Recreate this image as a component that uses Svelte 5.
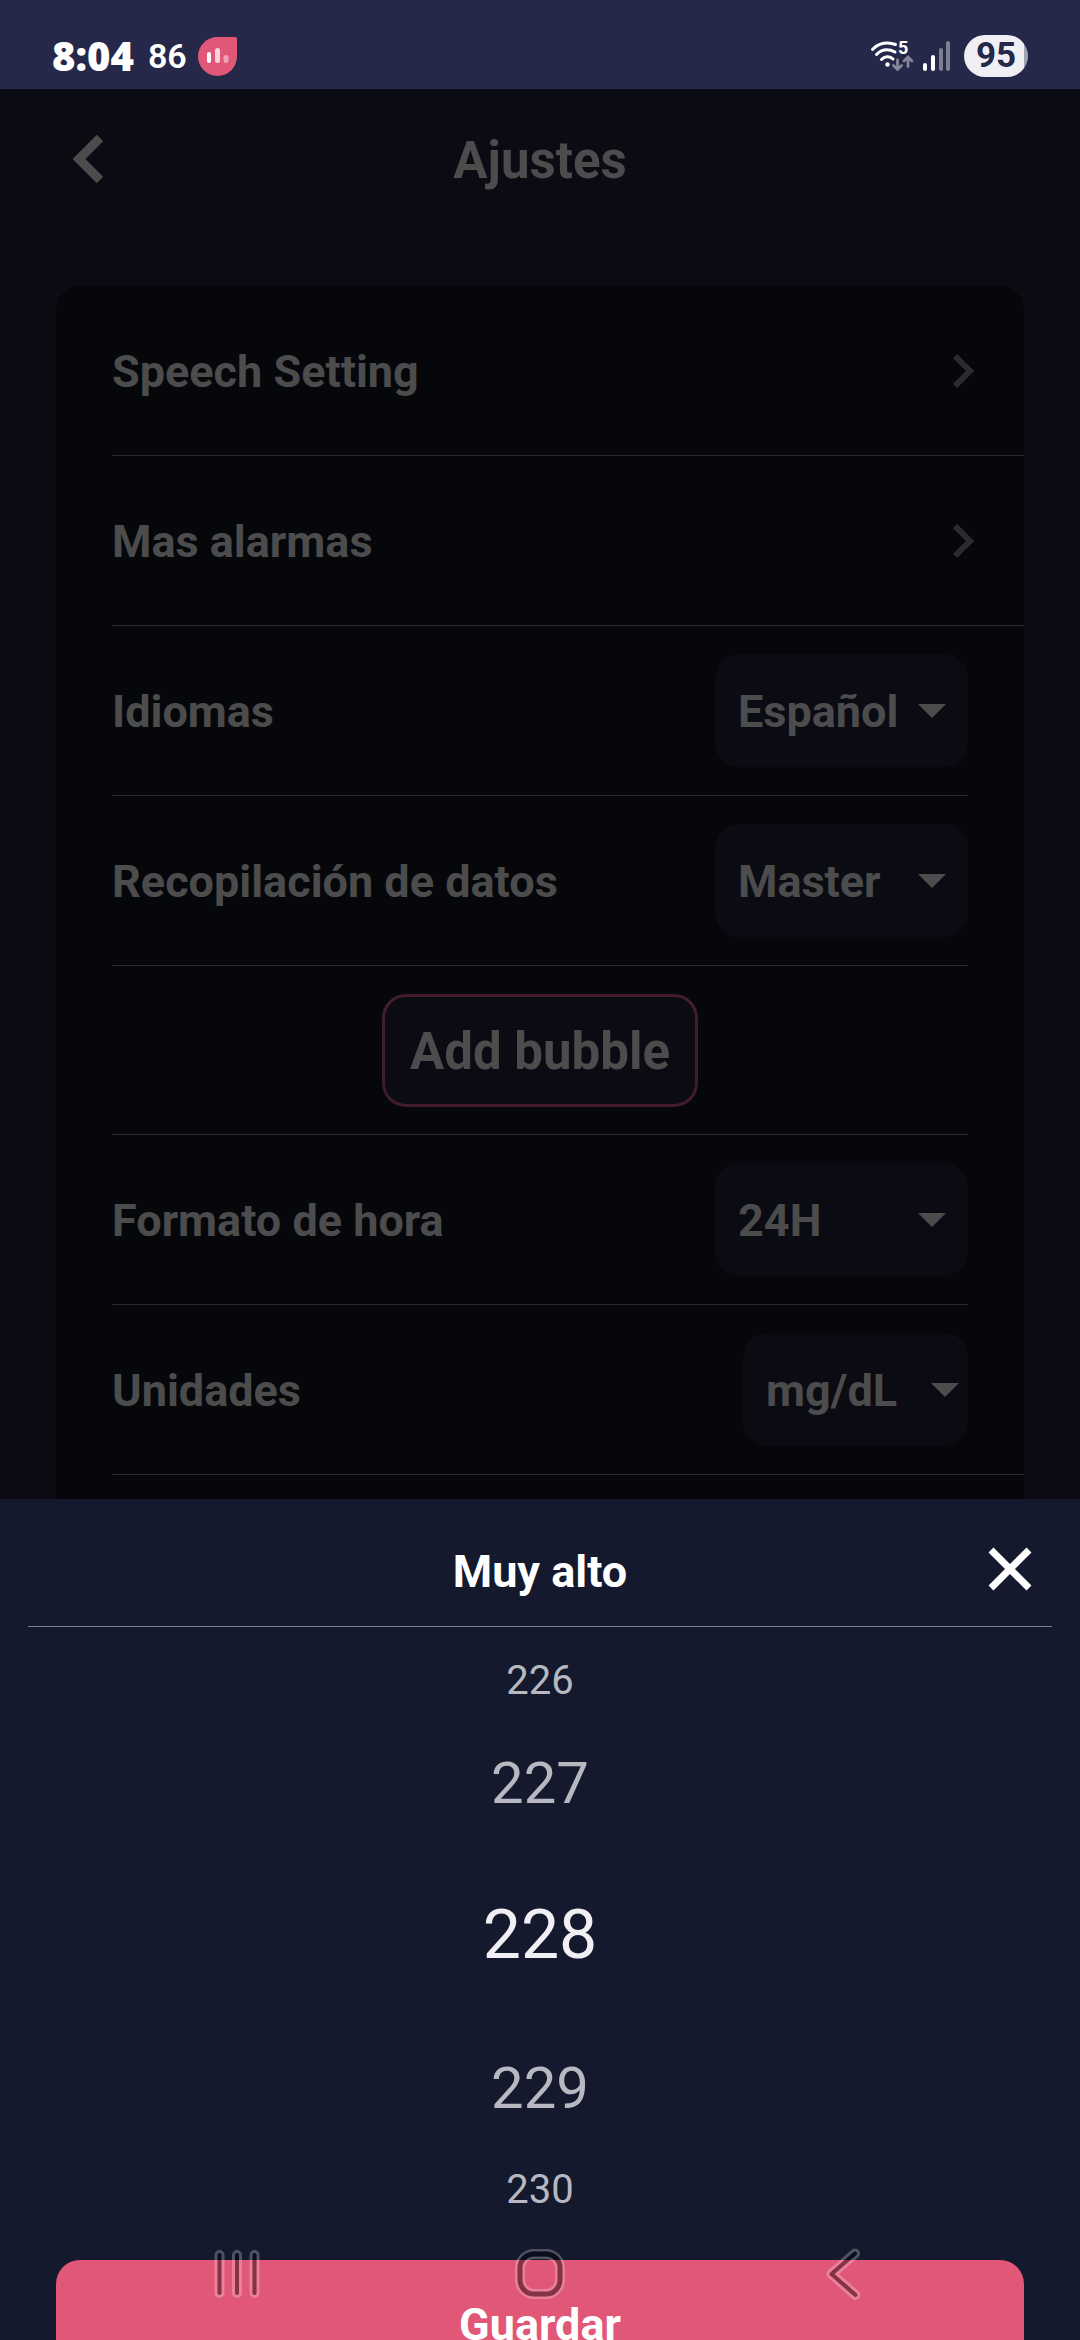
<script>
  const links = ['Speech Setting', 'Mas alarmas'];
  const choices = [
    { id: 'language', label: 'Idiomas', options: ['Español', 'English'] },
    { id: 'collection', label: 'Recopilación de datos', options: ['Master', 'Follower'] }
  ];
  const levels = [
    { value: 226, size: 'far' },
    { value: 227, size: 'near' },
    { value: 228, size: 'current' },
    { value: 229, size: 'near' },
    { value: 230, size: 'far' }
  ];
  let selected = $state(228);
</script>

{#snippet picker(id, label, options, narrow)}
  <div class="row" class:wide={narrow}>
    <label for={id}>{label}</label>
    <div class="select" class:narrow>
      <select {id}>
        {#each options as option}
          <option>{option}</option>
        {/each}
      </select>
      <svg class="caret" viewBox="0 0 28 14" aria-hidden="true"><path d="M0 0h28L14 14z" /></svg>
    </div>
  </div>
{/snippet}

{#snippet navIcon(id, d, thick)}
  <svg viewBox="0 0 52 52" aria-hidden="true">
    <mask id={id} maskUnits="userSpaceOnUse" x="0" y="0" width="52" height="52">
      <rect width="52" height="52" fill="#fff" />
      <path {d} stroke="#000" stroke-width={thick} />
    </mask>
    <path {d} stroke="#fff" stroke-opacity="0.25" stroke-width="10" mask="url(#{id})" />
    <path {d} stroke="#000" stroke-opacity="0.41" stroke-width={thick} />
  </svg>
{/snippet}

<div class="screen">
  <div class="status">
    <span class="clock">8:04</span>
    <span class="glucose">86</span>
    <svg class="app" viewBox="0 0 39 39" aria-hidden="true">
      <path d="M19.5 0H37a2 2 0 0 1 2 2v17.500A19.500 19.500 0 1 1 19.500 0z" fill="#e05777" />
      <rect x="9" y="15" width="4" height="11" rx="2" fill="#fff" />
      <rect x="17" y="11" width="5" height="15" rx="2.500" fill="#fbd3de" />
      <rect x="25.500" y="18" width="5" height="8" rx="2.500" fill="#f0a3b5" />
    </svg>
    <svg class="wifi" viewBox="0 0 44 34" aria-hidden="true">
      <g fill="none" stroke="#fff" stroke-width="3" stroke-linecap="round">
        <path d="M2.500 10.500C9 3.500 18 2.500 25.500 5.500" />
        <path d="M6.500 15.500C12 10 19 10 25 13" />
        <path d="M11.500 20.500C15 17 20 17 23 20" />
      </g>
      <circle cx="17.500" cy="25.500" r="2.200" fill="#fff" />
      <text x="28" y="15" class="band">5</text>
      <g fill="none" stroke="#85869a" stroke-width="2.800" stroke-linecap="round" stroke-linejoin="round">
        <path d="M27.500 21v9.500M23.500 26.500l4 4 4-4" />
        <path d="M38 27.500V18M34 22l4-4 4 4" />
      </g>
    </svg>
    <svg class="signal" viewBox="0 0 28 30" aria-hidden="true">
      <rect x="0" y="22" width="4" height="8" rx="2" fill="#fff" />
      <rect x="8" y="14" width="4" height="16" rx="2" fill="#fff" />
      <rect x="16" y="7" width="4" height="23" rx="2" fill="#7d7e92" />
      <rect x="23" y="0" width="4" height="30" rx="2" fill="#7d7e92" />
    </svg>
    <span class="battery">95</span>
  </div>

  <main>
    <header>
      <button class="back" aria-label="Atrás">
        <svg viewBox="0 0 30 48" aria-hidden="true"><path d="M26 3L5 24l21 21" /></svg>
      </button>
      <h1>Ajustes</h1>
    </header>

    <div class="card">
      {#each links as link}
        <a class="row wide" href="#settings">
          <span class="name">{link}</span>
          <svg class="chevron" viewBox="0 0 20 34" aria-hidden="true"><path d="M2 2l15 15L2 32" /></svg>
        </a>
      {/each}
      {#each choices as c}
        {@render picker(c.id, c.label, c.options, false)}
      {/each}
      <div class="row action">
        <button class="bubble">Add bubble</button>
      </div>
      {@render picker('hour', 'Formato de hora', ['24H', '12H'], false)}
      {@render picker('units', 'Unidades', ['mg/dL', 'mmol/L'], true)}
    </div>
  </main>

  <section class="sheet" aria-labelledby="sheet-title">
    <div class="sheet-head">
      <h2 id="sheet-title">Muy alto</h2>
      <button class="close" aria-label="Cerrar">
        <svg viewBox="0 0 46 46" aria-hidden="true"><path d="M4 4l38 38M42 4L4 42" /></svg>
      </button>
    </div>
    <div class="wheel">
      {#each levels as level}
        <button class={level.size} aria-pressed={selected === level.value} onclick={() => (selected = level.value)}>
          {level.value}
        </button>
      {/each}
    </div>
    <button class="save">Guardar</button>
  </section>

  <nav>
    <button aria-label="Recientes">{@render navIcon('m-recent', 'M8.500 7v38M26 7v38M43.500 7v38', 4)}</button>
    <button aria-label="Inicio">
      {@render navIcon('m-home', 'M20 6h12a14 14 0 0 1 14 14v12a14 14 0 0 1-14 14H20a14 14 0 0 1-14-14V20A14 14 0 0 1 20 6z', 5)}
    </button>
    <button aria-label="Volver">{@render navIcon('m-back', 'M38 5.500L14.500 26 38.500 47', 4)}</button>
  </nav>
</div>

<style>
  :global(body) {
    margin: 0;
    background: #0b0b14;
  }
  .screen {
    position: relative;
    display: flex;
    flex-direction: column;
    height: 100vh;
    overflow: hidden;
    background: #0b0b14;
    color: #4c4c4c;
    font-family: Roboto, sans-serif;
    font-size: 45px;
    line-height: 52px;
    font-weight: 700;
  }
  button,
  select {
    margin: 0;
    padding: 0;
    border: 0;
    background: none;
    color: inherit;
    font: inherit;
  }
  h1,
  h2 {
    margin: 0;
  }
  svg {
    display: block;
    flex: none;
    overflow: visible;
  }

  .status {
    display: flex;
    align-items: center;
    flex: none;
    height: 66px;
    padding: 23px 52px 0;
    background: #252849;
    color: #fff;
  }
  .clock {
    font-family: "Noto Sans", sans-serif;
    font-size: 40px;
    font-weight: 900;
  }
  .glucose {
    margin-left: 14px;
    font-size: 34px;
    font-weight: 600;
  }
  .app {
    width: 39px;
    height: 39px;
    margin-left: 11px;
  }
  .wifi {
    width: 44px;
    height: 34px;
    margin-left: auto;
  }
  .band {
    fill: #fff;
    font-size: 18px;
    font-weight: 700;
  }
  .signal {
    width: 28px;
    height: 30px;
    margin: 0 13px 0 9px;
  }
  .battery {
    width: 64px;
    height: 42px;
    border-radius: 21px;
    background: linear-gradient(90deg, #f0f0f4 60px, #a3a4b3 60px);
    color: #252849;
    font-size: 35px;
    line-height: 42px;
    font-weight: 700;
    text-align: center;
  }

  main {
    display: flex;
    flex-direction: column;
    flex: 1 1 0;
    min-height: 0;
    overflow: hidden;
  }
  header {
    display: grid;
    grid-template-columns: 1fr auto 1fr;
    align-items: center;
    flex: none;
    height: 140px;
    padding: 0 74px;
  }
  h1 {
    padding-top: 4px;
    font-size: 51px;
    line-height: 60px;
  }
  .back {
    justify-self: start;
  }
  .back svg {
    width: 30px;
    height: 48px;
  }
  .back path,
  .chevron path,
  .close path {
    fill: none;
    stroke: #4c4c4c;
    stroke-width: 9;
  }

  .card {
    flex: 1 0 auto;
    margin: 57px 56px 0;
    padding-left: 56px;
    border-radius: 24px 24px 0 0;
    background: #06070b;
  }
  .row {
    display: flex;
    align-items: center;
    justify-content: space-between;
    height: 169px;
    margin-right: 56px;
    border-bottom: 1px solid #2a2b2e;
    color: inherit;
    text-decoration: none;
  }
  .row.wide {
    margin-right: 0;
    padding-right: 56px;
  }
  .row.action {
    justify-content: center;
    height: 168px;
  }
  a.row.wide {
    padding-right: 51px;
  }
  label,
  .name {
    padding-top: 3px;
  }
  .chevron {
    width: 20px;
    height: 34px;
  }
  .chevron path {
    stroke: #2a2b2e;
    stroke-width: 6;
  }
  .select {
    display: grid;
    align-items: center;
    width: 253px;
  }
  .select.narrow {
    width: 225px;
  }
  .select > * {
    grid-area: 1 / 1;
  }
  select {
    appearance: none;
    box-sizing: border-box;
    width: 100%;
    height: 113px;
    padding: 3px 23px 0;
    border-radius: 24px;
    background: #0b0b14;
  }
  .caret {
    justify-self: end;
    width: 28px;
    height: 14px;
    margin-right: 22px;
    fill: #4c4c4c;
    pointer-events: none;
  }
  .narrow .caret {
    margin-right: 9px;
  }
  .bubble {
    box-sizing: border-box;
    height: 113px;
    padding: 3px 25px 0;
    border: 3px solid #421d29;
    border-radius: 24px;
    background: #0b0b14;
    font-size: 51px;
  }

  .sheet {
    flex: none;
    display: flex;
    flex-direction: column;
    margin-bottom: -50px;
    background: #14192d;
    color: #fff;
  }
  .sheet-head {
    display: grid;
    grid-template-columns: 1fr auto 1fr;
    align-items: center;
    height: 115px;
    margin: 0 28px;
    padding: 12px 19px 0;
    border-bottom: 1px solid #7f828b;
  }
  h2 {
    grid-column: 2;
    padding-top: 6px;
    font-size: 45px;
    line-height: 52px;
  }
  .close {
    justify-self: end;
  }
  .close svg {
    width: 46px;
    height: 46px;
  }
  .close path {
    stroke: #fff;
    stroke-width: 7;
  }
  .wheel {
    display: flex;
    flex-direction: column;
    padding: 8px 0;
    color: #b8b9c0;
  }
  .wheel button {
    font-weight: 400;
  }
  .wheel .far {
    height: 91px;
    font-size: 40px;
  }
  .wheel .near {
    height: 113px;
    font-size: 58px;
  }
  .wheel .current {
    height: 192px;
    color: #f0f0f4;
    font-size: 68px;
  }
  .save {
    height: 130px;
    margin: 17px 56px 0;
    border-radius: 24px 24px 0 0;
    background: #e05777;
  }

  nav {
    position: absolute;
    right: 0;
    bottom: 0;
    left: 0;
    display: grid;
    grid-template-columns: repeat(3, 1fr);
    height: 132px;
    padding: 0 85px;
  }
  nav button {
    display: grid;
    place-items: center;
  }
  nav svg {
    width: 52px;
    height: 52px;
    fill: none;
    stroke-linecap: round;
    stroke-linejoin: round;
  }
</style>
